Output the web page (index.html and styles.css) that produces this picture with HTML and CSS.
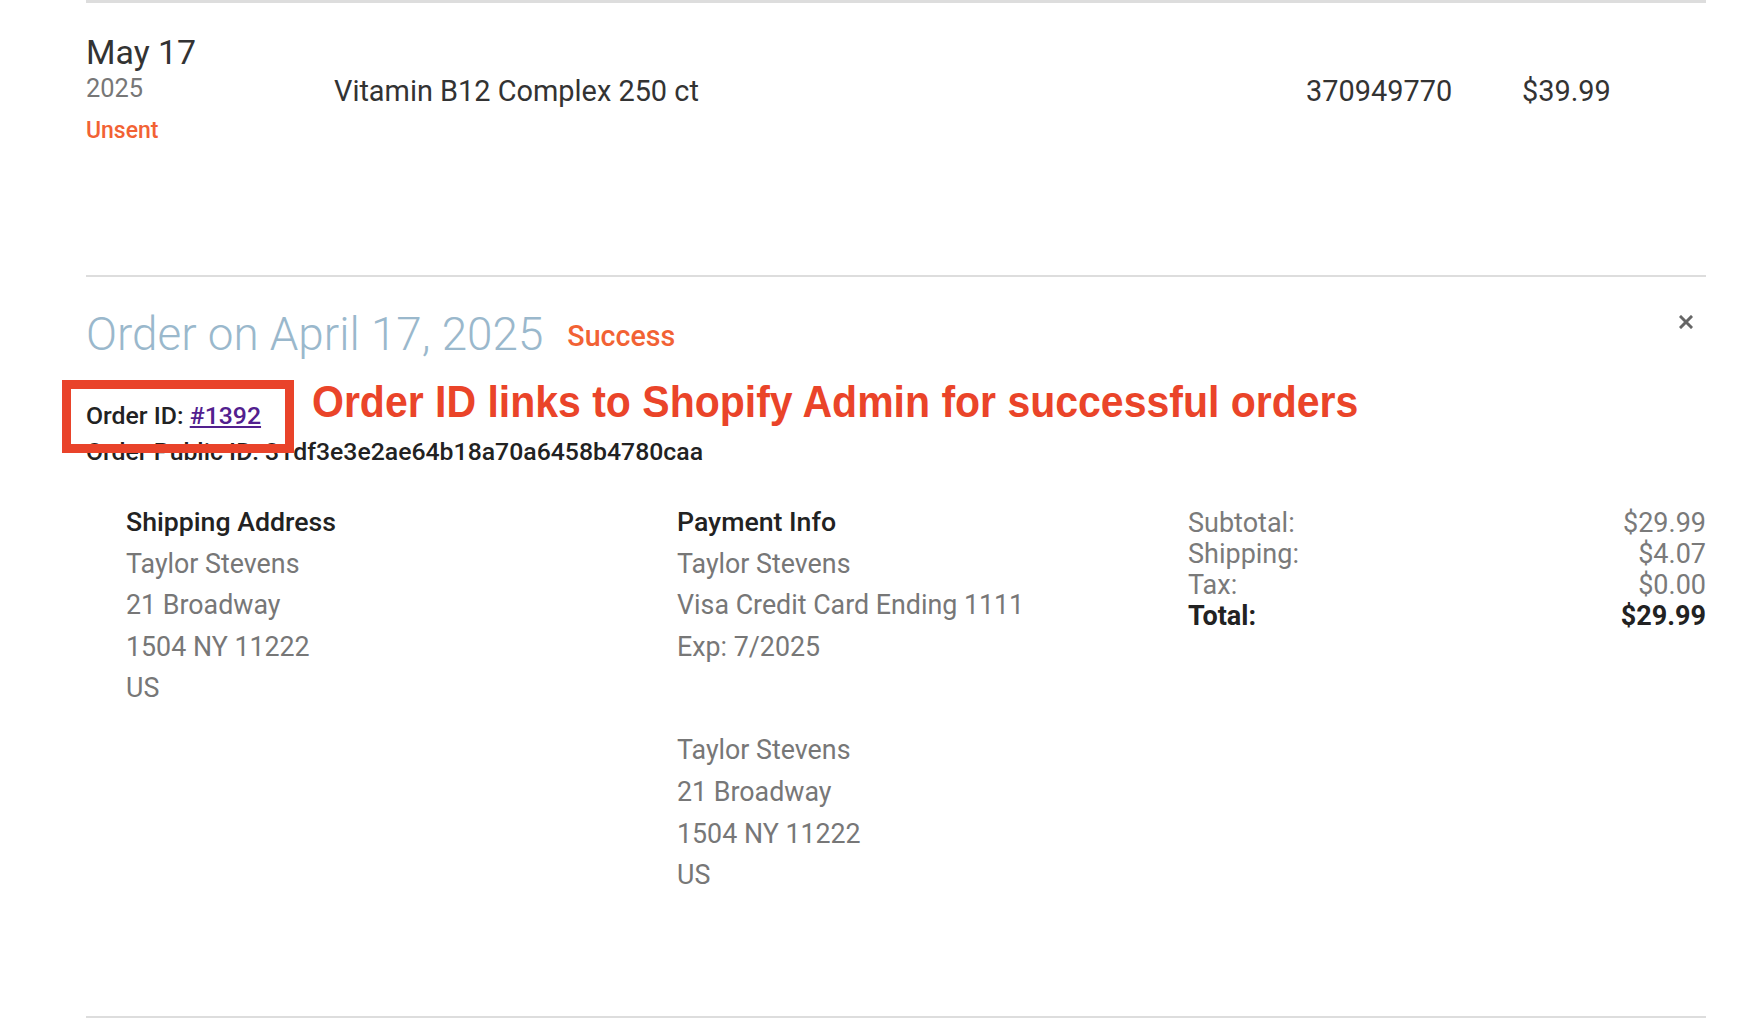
FILE: index.html
```html
<!DOCTYPE html>
<html lang="en">
<head>
<meta charset="utf-8">
<title>Order</title>
<link rel="stylesheet" href="styles.css">
</head>
<body>
<div class="page">
  <div class="item-row">
    <div class="date-col">
      <div class="date-main">May 17</div>
      <div class="date-year">2025</div>
      <div class="status-unsent">Unsent</div>
    </div>
    <div class="product-col">Vitamin B12 Complex 250 ct</div>
    <div class="sku-col">370949770</div>
    <div class="price-col">$39.99</div>
  </div>

  <div class="order">
    <div class="order-head">
      <h2 class="order-title">Order on April 17, 2025</h2>
      <span class="order-status">Success</span>
      <button class="close-btn" aria-label="Close">
        <svg width="14" height="14" viewBox="0 0 14 14"><path d="M2 2 L12 12 M12 2 L2 12" stroke="#666" stroke-width="3" stroke-linecap="square"/></svg>
      </button>
    </div>
    <div class="ids">
      <div class="id-line">Order ID: <a class="order-link" href="#">#1392</a></div>
      <div class="id-line">Order Public ID: 31df3e3e2ae64b18a70a6458b4780caa</div>
    </div>

    <div class="details">
      <div class="col shipping">
        <div class="col-title">Shipping Address</div>
        <div class="line">Taylor Stevens</div>
        <div class="line">21 Broadway</div>
        <div class="line">1504 NY 11222</div>
        <div class="line">US</div>
      </div>
      <div class="col payment">
        <div class="col-title">Payment Info</div>
        <div class="line">Taylor Stevens</div>
        <div class="line">Visa Credit Card Ending 1111</div>
        <div class="line">Exp: 7/2025</div>
        <div class="billing">
          <div class="line">Taylor Stevens</div>
          <div class="line">21 Broadway</div>
          <div class="line">1504 NY 11222</div>
          <div class="line">US</div>
        </div>
      </div>
      <div class="col totals">
        <div class="total-row"><span>Subtotal:</span><span>$29.99</span></div>
        <div class="total-row"><span>Shipping:</span><span>$4.07</span></div>
        <div class="total-row"><span>Tax:</span><span>$0.00</span></div>
        <div class="total-row grand"><span>Total:</span><span>$29.99</span></div>
      </div>
    </div>

    <div class="annot-box"></div>
    <div class="annot-text">Order ID links to Shopify Admin for successful orders</div>
  </div>
</div>
</body>
</html>
```

FILE: styles.css
```css
html, body {
  margin: 0;
  padding: 0;
  background: #fff;
}
body {
  font-family: Roboto, "Noto Sans", "Liberation Sans", sans-serif;
  color: #333;
}
.page {
  margin-left: 86px;
  width: 1620px;
}
.item-row {
  border-top: 3px solid #dddddd;
  display: flex;
  align-items: center;
  padding: 31px 0 129px 0;
}
.date-col {
  width: 248px;
  flex: none;
}
.date-main {
  font-size: 33.8px;
  line-height: 38px;
  color: #333;
}
.date-year {
  font-size: 25.4px;
  line-height: 33px;
  color: #777;
}
.status-unsent {
  margin-top: 11px;
  font-size: 23px;
  line-height: 30px;
  font-weight: 500;
  color: #f26234;
}
.product-col,
.sku-col,
.price-col {
  font-size: 28.9px;
  line-height: 34px;
  color: #333;
  margin-top: 2px;
}
.product-col {
  flex: 1;
}
.sku-col {
  width: 216px;
  flex: none;
}
.price-col {
  width: 184px;
  flex: none;
}
.order {
  position: relative;
  border-top: 2px solid #dddddd;
  border-bottom: 2px solid #dddddd;
  padding: 31px 0 119px 0;
}
.order-head {
  display: flex;
  align-items: flex-end;
}
.order-title {
  margin: 0;
  font-size: 45.8px;
  line-height: 54px;
  font-weight: 300;
  color: #9ab8cc;
}
.order-status {
  margin-left: 24px;
  font-size: 28.6px;
  line-height: 34px;
  font-weight: 500;
  color: #f26234;
  margin-bottom: 9px;
}
.close-btn {
  margin-left: auto;
  margin-right: 13px;
  align-self: flex-start;
  margin-top: 7px;
  border: 0;
  background: none;
  padding: 0;
  width: 14px;
  height: 14px;
  line-height: 0;
  cursor: pointer;
}
.ids {
  margin-top: 36px;
}
.id-line {
  font-size: 24.8px;
  line-height: 36px;
  font-weight: 500;
  color: #222;
}
.order-link {
  color: #52208e;
  text-decoration: underline;
}
.details {
  margin-top: 32px;
  padding-left: 40px;
  display: grid;
  grid-template-columns: 551px 511px 1fr;
}
.col-title {
  font-size: 26.7px;
  line-height: 41.6px;
  font-weight: 500;
  color: #222;
}
.line {
  font-size: 26.8px;
  line-height: 41.6px;
  color: #777;
}
.billing {
  margin-top: 62px;
}
.totals {
  margin-top: 6px;
}
.total-row {
  display: flex;
  justify-content: space-between;
  font-size: 27px;
  line-height: 31px;
  color: #7a7a7a;
}
.total-row.grand {
  font-weight: 700;
  color: #222;
}
.annot-box {
  position: absolute;
  left: -24px;
  top: 103px;
  width: 214px;
  height: 55px;
  border: 9px solid #e9432a;
}
.annot-text {
  position: absolute;
  left: 226px;
  top: 99px;
  font-family: "Liberation Sans", Arial, sans-serif;
  font-weight: 700;
  font-size: 45px;
  line-height: 52px;
  color: #ea4429;
  white-space: nowrap;
  transform: scaleX(0.911);
  transform-origin: left center;
}
```
